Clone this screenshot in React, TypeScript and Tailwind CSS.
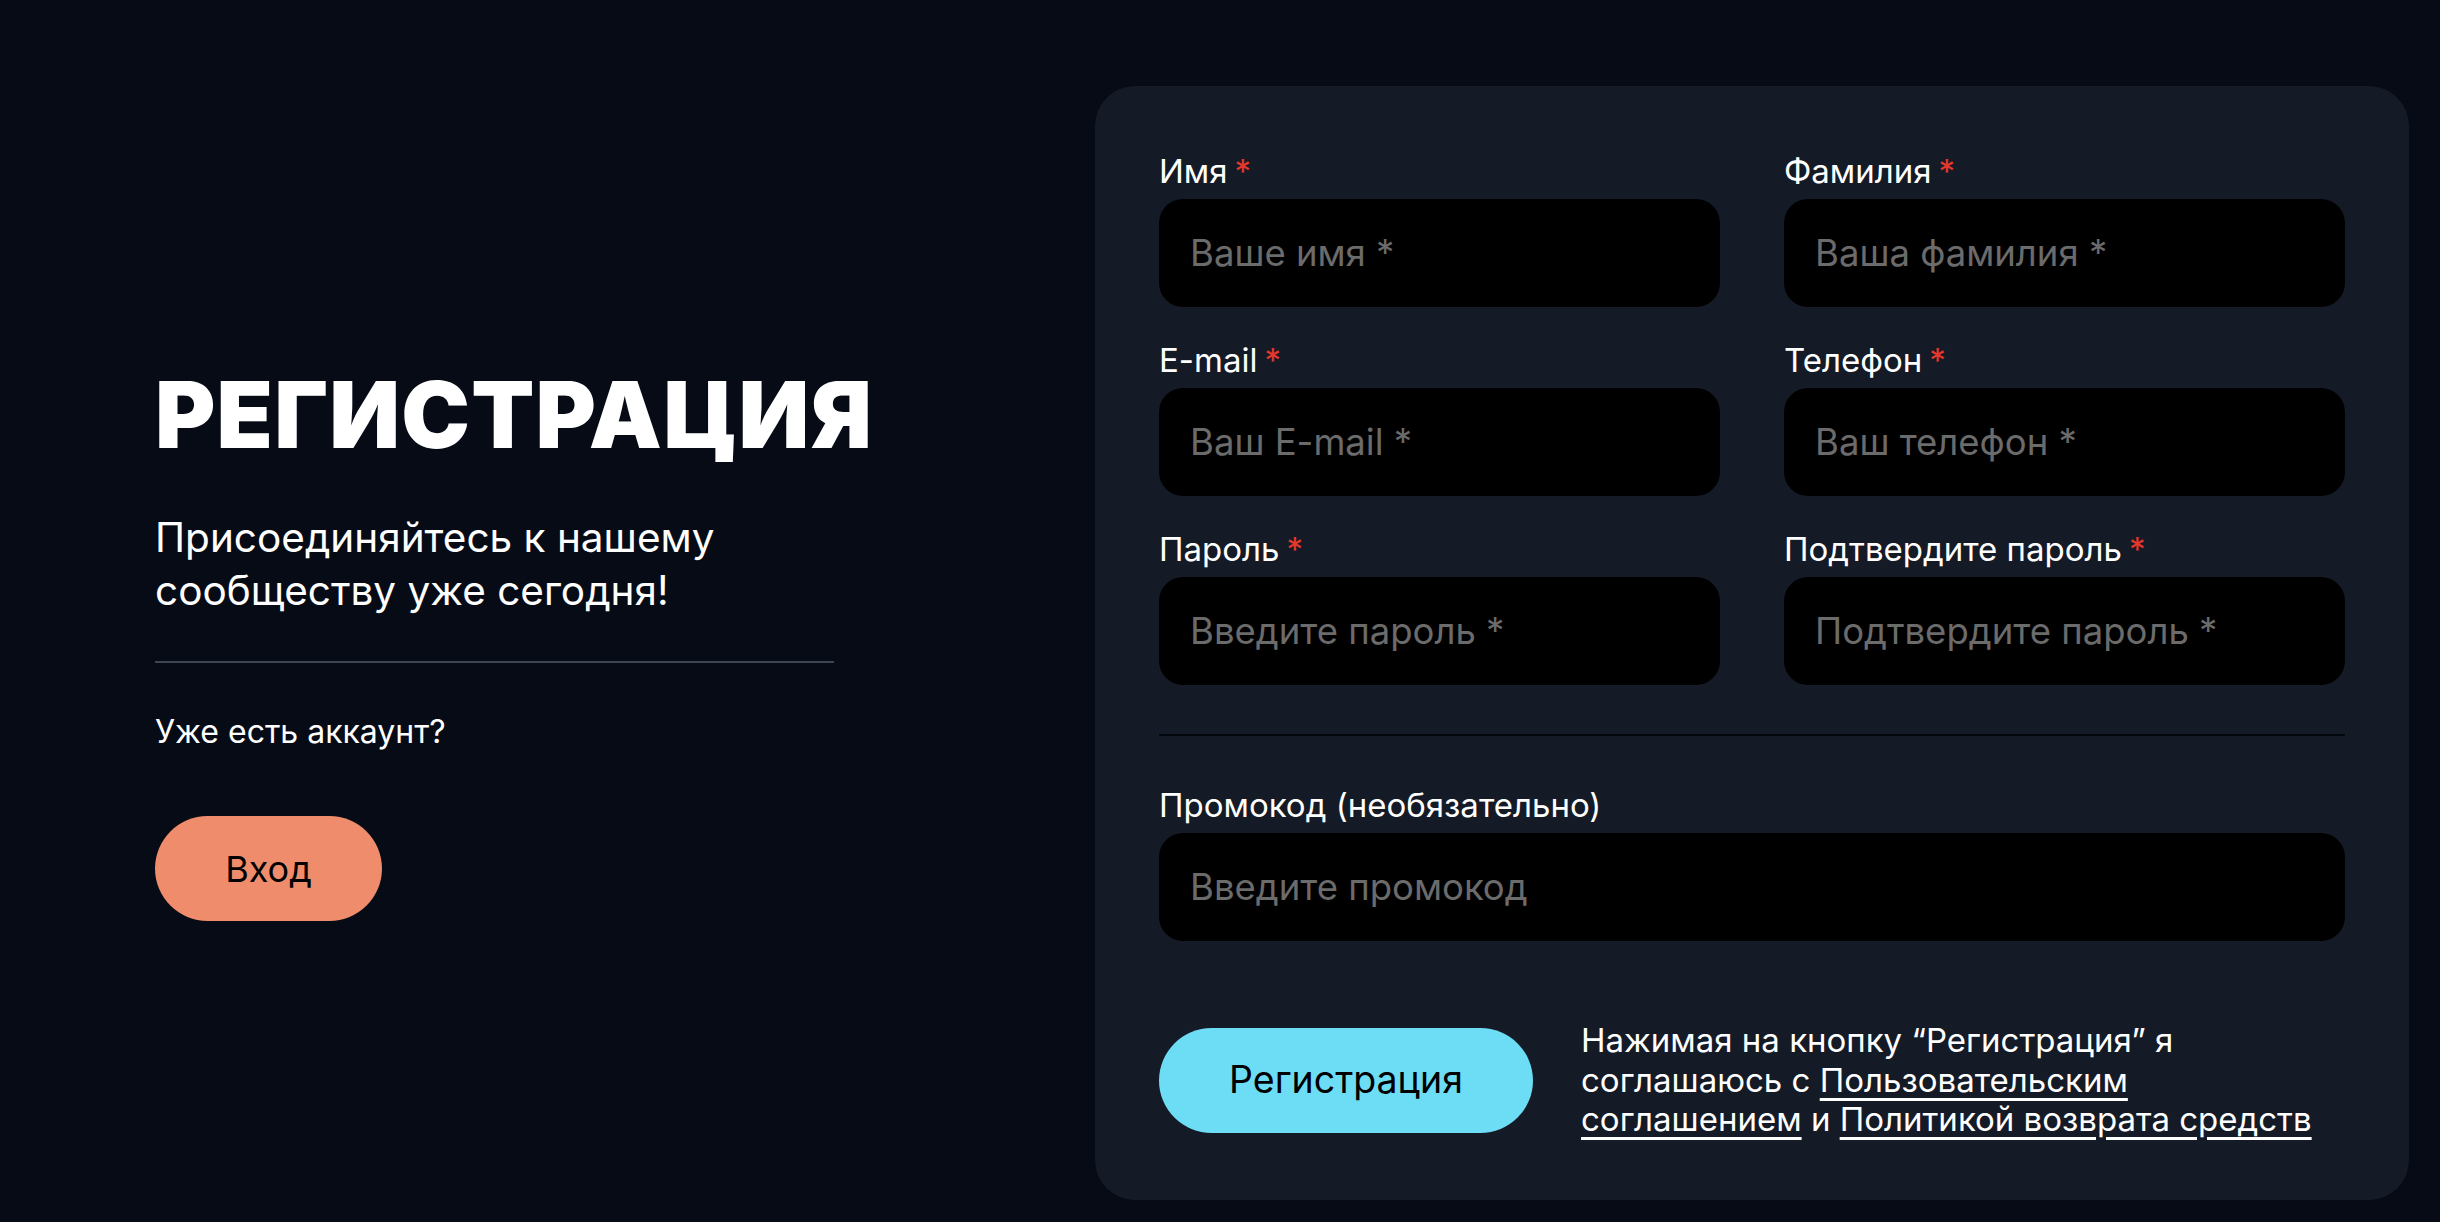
import React from "react";

function Field({ label, placeholder }: { label: string; placeholder: string }) {
  return (
    <div className="flex flex-col">
      <label className="mb-[8px] text-[33px] leading-[40px] text-white">
        {label}
        <span className="ml-[7px] text-[#e5372b]">*</span>
      </label>
      <input
        placeholder={placeholder}
        className="h-[108px] w-full rounded-[24px] bg-black pl-[31px] text-[36.5px] text-white outline-none placeholder:text-[#6b6b6b]"
      />
    </div>
  );
}

export default function App() {
  return (
    <div className="flex min-h-[1222px] w-full bg-[#060b16] font-['Inter',sans-serif]">
      <div className="flex w-[1095px] shrink-0 flex-col items-start pl-[155px] pt-[369px]">
        <h1 className="text-[92px] font-black leading-none tracking-[1.2px] text-white">РЕГИСТРАЦИЯ</h1>
        <p className="mt-[50px] text-[40.5px] leading-[53px] text-white">
          Присоединяйтесь к нашему
          <br />
          сообществу уже сегодня!
        </p>
        <div className="mt-[44px] h-[2px] w-[679px] bg-[#3d4552]" />
        <p className="mt-[49px] text-[32px] leading-[40px] text-white">Уже есть аккаунт?</p>
        <button className="mt-[64px] h-[105px] w-[227px] rounded-full bg-[#ef8c6c] text-[36px] text-black">
          Вход
        </button>
      </div>
      <div className="mt-[86px] h-[1114px] w-[1314px] shrink-0 rounded-[40px] bg-[#151b26] px-[64px] pt-[65px]">
        <div className="grid grid-cols-2 gap-x-[64px] gap-y-[33px]">
          <Field label="Имя" placeholder="Ваше имя *" />
          <Field label="Фамилия" placeholder="Ваша фамилия *" />
          <Field label="E-mail" placeholder="Ваш E-mail *" />
          <Field label="Телефон" placeholder="Ваш телефон *" />
          <Field label="Пароль" placeholder="Введите пароль *" />
          <Field label="Подтвердите пароль" placeholder="Подтвердите пароль *" />
        </div>
        <div className="mt-[49px] h-[2px] w-full bg-[#03060a]" />
        <div className="mt-[49px] flex flex-col">
          <label className="mb-[8px] text-[33px] leading-[40px] text-white">Промокод (необязательно)</label>
          <input
            placeholder="Введите промокод"
            className="h-[108px] w-full rounded-[24px] bg-black pl-[31px] text-[36.5px] text-white outline-none placeholder:text-[#6b6b6b]"
          />
        </div>
        <div className="mt-[80px] flex items-center gap-[48px]">
          <button className="h-[105px] w-[374px] shrink-0 rounded-full bg-[#6ddcf5] text-[37.5px] text-black">
            Регистрация
          </button>
          <p className="whitespace-nowrap text-[33px] leading-[39.5px] text-white">
            Нажимая на кнопку “Регистрация” я
            <br />
            соглашаюсь с <a className="underline underline-offset-[6px]" href="#">Пользовательским</a>
            <br />
            <a className="underline underline-offset-[6px]" href="#">соглашением</a> и{" "}
            <a className="underline underline-offset-[6px]" href="#">Политикой возврата средств</a>
          </p>
        </div>
      </div>
    </div>
  );
}
